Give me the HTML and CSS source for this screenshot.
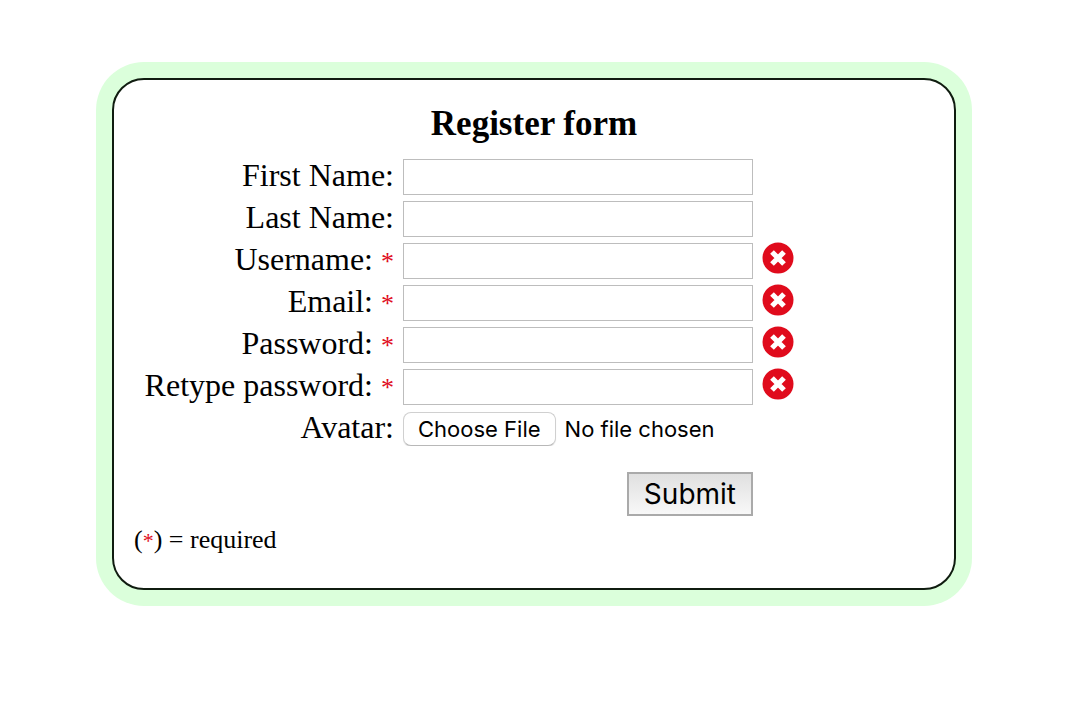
FILE: index.html
```html
<!DOCTYPE html>
<html lang="en">
<head>
<meta charset="utf-8">
<title>Register form</title>
<link rel="stylesheet" href="styles.css">
</head>
<body>
<svg class="sprite" aria-hidden="true">
  <symbol id="invalid" viewBox="0 0 32 32">
    <circle cx="16" cy="16" r="15.5" fill="#e00b1c"/>
    <path d="M10 10 22 22M22 10 10 22" stroke="#fff" stroke-width="5.2"/>
  </symbol>
</svg>
<main class="card">
  <form class="form" novalidate>
    <h1 class="title">Register form</h1>
    <div class="fields">
      <div class="row">
        <label class="label" for="first">First Name:</label>
        <input class="text" id="first" type="text">
      </div>
      <div class="row">
        <label class="label" for="last">Last Name:</label>
        <input class="text" id="last" type="text">
      </div>
      <div class="row">
        <label class="label" for="user">Username: <span class="star">*</span></label>
        <input class="text" id="user" type="text" required>
        <svg class="icon" role="img" aria-label="Invalid"><use href="#invalid"/></svg>
      </div>
      <div class="row">
        <label class="label" for="email">Email: <span class="star">*</span></label>
        <input class="text" id="email" type="email" required>
        <svg class="icon" role="img" aria-label="Invalid"><use href="#invalid"/></svg>
      </div>
      <div class="row">
        <label class="label" for="pass">Password: <span class="star">*</span></label>
        <input class="text" id="pass" type="password" required>
        <svg class="icon" role="img" aria-label="Invalid"><use href="#invalid"/></svg>
      </div>
      <div class="row">
        <label class="label" for="again">Retype password: <span class="star">*</span></label>
        <input class="text" id="again" type="password" required>
        <svg class="icon" role="img" aria-label="Invalid"><use href="#invalid"/></svg>
      </div>
      <div class="row">
        <label class="label" for="avatar">Avatar:</label>
        <input class="file" id="avatar" type="file">
      </div>
      <div class="row actions">
        <button class="submit" type="submit">Submit</button>
      </div>
    </div>
    <p class="note">(<span class="star">*</span>) = required</p>
  </form>
</main>
</body>
</html>
```

FILE: styles.css
```css
* {
  box-sizing: border-box;
}

body {
  margin: 0;
  padding: 78px 112px;
  background: #fff;
  color: #000;
  font-family: "Liberation Serif", "Times New Roman", serif;
  font-size: 32px;
}

.sprite {
  display: none;
}

.card {
  max-width: 844px;
  margin: 0 auto;
  padding: 24px 20px 30px;
  border: 2px solid #101c10;
  border-radius: 32px;
  background: #fff;
  box-shadow: 0 0 0 16px #dbffdb;
}

.title {
  margin: 0 0 15px;
  font-size: 35px;
  line-height: 40px;
  text-align: center;
}

.fields {
  display: flex;
  flex-direction: column;
  gap: 6px;
}

.row {
  display: grid;
  grid-template-columns: 260px 350px 32px;
  column-gap: 9px;
  align-items: start;
  min-height: 36px;
}

.label {
  line-height: 32px;
  text-align: right;
  white-space: nowrap;
}

.star {
  color: #e00b1c;
  font-size: 26px;
  line-height: 1;
}

.text {
  width: 100%;
  height: 36px;
  margin: 0;
  padding: 2px 4px;
  border: 1px solid #bdbdbd;
  background: #fff;
  font: 22px Inter, sans-serif;
}

.icon {
  width: 32px;
  height: 32px;
  margin-top: -1px;
}

.file {
  width: 100%;
  margin-top: 1px;
  font: 22px/32px Inter, sans-serif;
}

.file::file-selector-button {
  height: 34px;
  margin: 0 9px 0 0;
  padding: 0 14px;
  border: 1px solid #d0d0d0;
  border-bottom-color: #b8b8b8;
  border-radius: 8px;
  background: #fff;
  box-shadow: 0 1px 1px #e4e4e4;
  color: #000;
  font: inherit;
}

.actions {
  margin-top: 19px;
}

.submit {
  grid-column: 2;
  justify-self: end;
  height: 44px;
  padding: 0 15px;
  border: 2px solid #aaa;
  background: linear-gradient(#e0e0e0, #f8f8f8);
  color: #000;
  font: 28px Inter, sans-serif;
}

.note {
  margin: 8px 0 0;
  font-size: 26px;
  line-height: 32px;
  padding-bottom: 2px;
}

.note .star {
  font-size: 22px;
}
```
